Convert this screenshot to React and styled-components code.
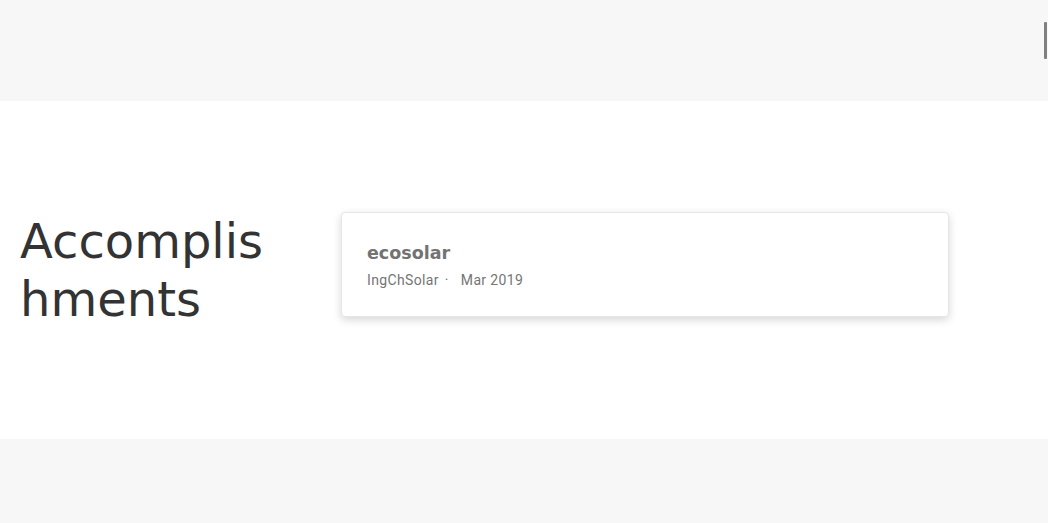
import React from "react";
import styled, { createGlobalStyle } from "styled-components";

const GlobalStyle = createGlobalStyle`
  html, body {
    margin: 0;
    padding: 0;
    background: #f7f7f7;
  }
  body {
    font-family: "DejaVu Sans", "Liberation Sans", sans-serif;
  }
`;

const Page = styled.div`
  display: flex;
  flex-direction: column;
  min-height: 523px;
  background: #f7f7f7;
`;

const Band = styled.div`
  height: ${(p) => p.height}px;
  background: #f7f7f7;
`;

const Section = styled.section`
  display: flex;
  align-items: flex-start;
  height: 338px;
  box-sizing: border-box;
  padding: 111px 99px 0 20px;
  background: #ffffff;
`;

const HeadingCol = styled.div`
  width: 321px;
  flex-shrink: 0;
`;

const Heading = styled.h2`
  width: 262px;
  margin: 0;
  font-family: "DejaVu Sans", sans-serif;
  font-weight: 400;
  font-size: 48px;
  line-height: 58px;
  color: #333333;
  word-break: break-all;
`;

const Card = styled.div`
  flex: 1;
  height: 105px;
  box-sizing: border-box;
  padding: 29px 25px 0;
  background: #ffffff;
  border: 1px solid #e6e6e6;
  border-radius: 4px;
  box-shadow: 0 3px 8px rgba(0, 0, 0, 0.16);
`;

const Title = styled.div`
  font-family: "DejaVu Sans", sans-serif;
  font-weight: 700;
  font-size: 17.5px;
  line-height: 22px;
  color: #737373;
`;

const Meta = styled.div`
  margin-top: 7px;
  font-family: Roboto, "Liberation Sans", sans-serif;
  font-size: 14px;
  line-height: 18px;
  color: #757575;
  letter-spacing: 0.35px;
`;

const Dot = styled.span`
  margin: 0 12px 0 6px;
`;

const ScrollThumb = styled.div`
  position: fixed;
  top: 22px;
  right: 1px;
  width: 3px;
  height: 37px;
  background: #808080;
  border-radius: 1px;
`;

const App = () => {
  return (
    <Page>
      <GlobalStyle />
      <Band height={101} />
      <Section>
        <HeadingCol>
          <Heading>Accomplishments</Heading>
        </HeadingCol>
        <Card>
          <Title>ecosolar</Title>
          <Meta>
            IngChSolar<Dot>·</Dot>Mar 2019
          </Meta>
        </Card>
      </Section>
      <Band height={85} />
      <ScrollThumb />
    </Page>
  );
};

export default App;
